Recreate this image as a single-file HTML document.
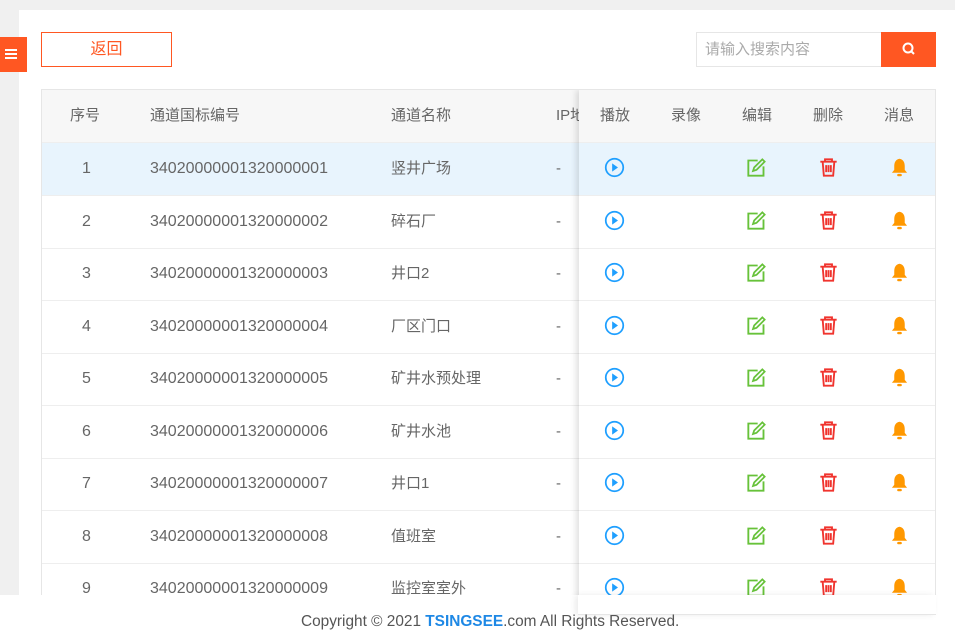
<!DOCTYPE html>
<html><head><meta charset="utf-8"><style>
*{box-sizing:border-box;margin:0;padding:0}
body{width:955px;height:636px;background:#f0f0f0;font-family:"Liberation Sans","Noto Sans CJK SC",sans-serif;position:relative;overflow:hidden;color:#666;font-size:15px}
.panel{position:absolute;left:19px;top:10px;width:936px;height:626px;background:#fff}
.menu{position:absolute;left:0;top:37px;width:27px;height:35px;background:#ff5722}
.menu i{position:absolute;left:5px;width:12px;height:2px;background:#fff}
.back{position:absolute;left:41px;top:32px;width:131px;height:35px;border:1px solid #ff5722;color:#ff5722;text-align:center;line-height:33px;font-size:16px}
.search{position:absolute;left:696px;top:32px;width:186px;height:35px;border:1px solid #e6e6e6;color:#aaa;font-size:15px;line-height:33px;padding-left:8px}
.sbtn{position:absolute;left:881px;top:32px;width:55px;height:35px;background:#ff5722}
.tbl{position:absolute;left:41px;top:89px;width:895px;height:510px;border:1px solid #e6e6e6;overflow:hidden}
.row{position:absolute;left:0;width:895px;height:53px;border-bottom:1px solid #eee}
.hd{background:#f7f7f7;top:0;height:53px}
.c{position:absolute;top:0;line-height:52px;white-space:nowrap}
.n{font-size:16px}
.fix{position:absolute;left:537px;top:0;width:358px;height:530px;background:#fff;box-shadow:-3px 0 6px rgba(0,0,0,.12)}
.fix .row{width:358px}
.ic{position:absolute;top:14px}
.foot{position:absolute;left:0;top:595px;width:955px;height:41px;background:#fff}
.fline{position:absolute;left:578px;top:595px;width:358px;height:20px;border-bottom:1px solid #e6e6e6;box-shadow:-3px 0 6px rgba(0,0,0,.08);background:#fff}
.ft{position:absolute;left:301px;top:613px;font-size:15.4px;color:#555}
.ts{color:#1e88e5;font-weight:bold;letter-spacing:0}
</style></head><body>
<div class="panel"></div>
<div class="menu"><i style="top:12px"></i><i style="top:16px"></i><i style="top:20px"></i></div>
<div class="back">返回</div>
<div class="search">请输入搜索内容</div>
<div class="sbtn"><svg width="55" height="35"><circle cx="27" cy="16" r="4.5" fill="none" stroke="#fff" stroke-width="2"/><line x1="30.5" y1="19.5" x2="33" y2="22" stroke="#fff" stroke-width="2"/></svg></div>
<div class="tbl">
<div class="row hd"><span class="c" style="left:28px">序号</span><span class="c" style="left:108px">通道国标编号</span><span class="c" style="left:349px">通道名称</span><span class="c" style="left:514px">IP地址</span></div>
<div id="rows"></div>
<div class="fix" id="fix">
<div class="row hd"><span class="c" style="left:21px">播放</span><span class="c" style="left:92px">录像</span><span class="c" style="left:163px">编辑</span><span class="c" style="left:234px">删除</span><span class="c" style="left:305px">消息</span></div>
</div>
</div>
<div class="foot"></div>
<div class="fline"></div>
<div class="ft">Copyright © 2021 <span class="ts">TSINGSEE</span>.com All Rights Reserved.</div>
<script>
var names=["竖井广场","碎石厂","井口2","厂区门口","矿井水预处理","矿井水池","井口1","值班室","监控室室外"];
var r="",f="";
for(var i=0;i<9;i++){var t=53+i*52.5;var bg=i==0?"background:#e8f4fd;":"";
r+='<div class="row" style="top:'+t+'px;'+bg+'"><span class="c n" style="left:40px">'+(i+1)+'</span><span class="c n" style="left:108px">3402000000132000000'+(i+1)+'</span><span class="c" style="left:349px">'+names[i]+'</span><span class="c" style="left:514px">-</span></div>';
f+='<div class="row" style="top:'+t+'px;'+bg+'">'+
'<svg class="ic" style="left:25px" width="21" height="21" viewBox="0 0 18 18"><circle cx="9" cy="9" r="7.5" fill="none" stroke="#1e9fff" stroke-width="1.5"/><path d="M7 5.5L12 9L7 12.5Z" fill="#1e9fff"/></svg>'+
'<svg class="ic" style="left:167px" width="21" height="21" viewBox="0 0 18 18"><path d="M10 3H2V16H15V8" fill="none" stroke="#67c23a" stroke-width="1.6"/><path d="M6 12L7 9L14 2L16 4L9 11Z" fill="none" stroke="#67c23a" stroke-width="1.5"/></svg>'+
'<svg class="ic" style="left:239px" width="21" height="21" viewBox="0 0 18 18"><path d="M2 4H16M6 4V2H12V4M4 4L5 16H13L14 4M7 7V13M9 7V13M11 7V13" fill="none" stroke="#f0342e" stroke-width="1.6"/></svg>'+
'<svg class="ic" style="left:310px" width="21" height="21" viewBox="0 0 18 18"><path d="M9 1.5C5.5 2 4.5 5 4.5 8V11L2.5 13.5H15.5L13.5 11V8C13.5 5 12.5 2 9 1.5Z" fill="#ff9800"/><rect x="7" y="14.5" width="4" height="2" rx="1" fill="#ff9800"/></svg></div>';}
document.getElementById("rows").outerHTML=r;
document.getElementById("fix").insertAdjacentHTML("beforeend",f);
</script>
</body></html>
